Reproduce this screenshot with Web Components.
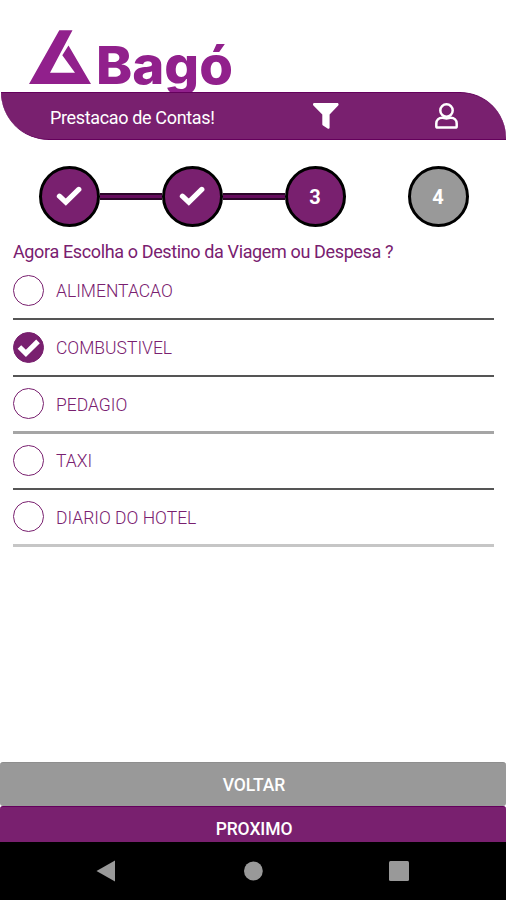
<!DOCTYPE html>
<html lang="pt-BR">
<head>
<meta charset="utf-8">
<meta name="viewport" content="width=device-width, initial-scale=1">
<title>Prestacao de Contas</title>
<style>
  :root {
    --primary: #79206f;
    --primary-dark: #64005c;
    --muted: #999999;
    --logo: #91208c;
  }
  body {
    margin: 0;
    background: #fff;
    font-family: Roboto, "Liberation Sans", sans-serif;
  }
</style>
</head>
<body>
<expense-app>
  <brand-logo slot="top"></brand-logo>
  <app-bar slot="top">Prestacao de Contas!</app-bar>

  <step-progress>
    <step-item state="done"></step-item>
    <step-item state="done"></step-item>
    <step-item state="current">3</step-item>
    <step-item state="pending">4</step-item>
  </step-progress>

  <option-list>
    <span slot="title">Agora Escolha o Destino da Viagem ou Despesa ?</span>
    <option-item>ALIMENTACAO</option-item>
    <option-item checked>COMBUSTIVEL</option-item>
    <option-item line="mid">PEDAGIO</option-item>
    <option-item>TAXI</option-item>
    <option-item line="soft">DIARIO DO HOTEL</option-item>
  </option-list>

  <action-button slot="actions" tone="muted">VOLTAR</action-button>
  <action-button slot="actions">PROXIMO</action-button>
  <system-nav slot="nav"></system-nav>
</expense-app>

<script>
function define(name, html) {
  const template = document.createElement("template");
  template.innerHTML = html;

  customElements.define(name, class extends HTMLElement {
    constructor() {
      super();
      this.attachShadow({ mode: "open" });
      this.shadowRoot.appendChild(template.content.cloneNode(true));
    }
  });
}

define("expense-app", `
  <style>
    :host {
      display: flex;
      flex-direction: column;
      width: 100%;
      height: 900px;
      overflow: hidden;
    }
    main {
      flex: 1;
      min-height: 0;
    }
    .actions {
      flex: none;
      height: 80px;
      overflow: hidden;
    }
  </style>
  <slot name="top"></slot>
  <main><slot></slot></main>
  <div class="actions"><slot name="actions"></slot></div>
  <slot name="nav"></slot>
`);

define("brand-logo", `
  <style>
    :host {
      display: block;
      flex: none;
      height: 92px;
    }
    svg {
      display: block;
      fill: var(--logo);
    }
    text {
      font: 800 52px Inter, "Liberation Sans", sans-serif;
    }
  </style>
  <svg width="260" height="110" viewBox="0 0 260 110">
    <path d="M59.3 30.3H72.5L50 72.8H75L62.3 55.2L68.5 45.6L91 84H29Z"/>
    <text x="96" y="84" textLength="137" lengthAdjust="spacingAndGlyphs">Bagó</text>
  </svg>
`);

// The bar is positioned so that it covers the tail of the logo's "g".
define("app-bar", `
  <style>
    :host {
      display: grid;
      grid-template-columns: 1fr 122px 119px;
      align-items: center;
      flex: none;
      box-sizing: border-box;
      height: 48px;
      margin-left: 1px;
      padding-left: 49px;
      background: var(--primary);
      border: solid var(--primary-dark);
      border-width: 1px 0;
      border-radius: 0 46px 0 48px;
      color: #fff;
      font-size: 18px;
      letter-spacing: -0.35px;
      position: relative;
    }
    span {
      padding-top: 2px;
    }
    svg {
      display: block;
      justify-self: center;
    }
  </style>
  <span><slot></slot></span>
  <svg width="26" height="26" viewBox="0 0 26 26">
    <path fill="#fff" d="M1.3 0H24.2C25.5 0 26 1.5 25.2 2.4L16.6 11.6V24.4C16.6 25.6 15.5 26 14.6 25.4L10 22.5C9.5 22.1 9.3 21.8 9.3 21.2V11.6L.4 2.4C-.4 1.5 .1 0 1.3 0Z"/>
  </svg>
  <svg width="23" height="26" viewBox="0 0 23 26" fill="none" stroke="#fff" stroke-width="2.5">
    <circle cx="11.5" cy="7.5" r="6.2"/>
    <path d="M7.3 14.8C3.7 14.8 1.3 17.3 1.3 20.6V23.2C1.3 24.1 1.8 24.6 2.7 24.6H20.3C21.2 24.6 21.7 24.1 21.7 23.2V20.6C21.7 17.3 19.3 14.8 15.7 14.8C14 14.8 13.5 15.6 11.5 15.6C9.5 15.6 9 14.8 7.3 14.8Z"/>
  </svg>
`);

define("step-progress", `
  <style>
    :host {
      display: flex;
      padding: 25.5px 37.5px 0 38.5px;
    }
  </style>
  <slot></slot>
`);

define("step-item", `
  <style>
    :host {
      display: flex;
      align-items: center;
      flex: none;
      width: 123px;
      height: 61px;
    }
    :host([state="pending"]) {
      width: 61px;
    }
    .dot {
      display: grid;
      place-items: center;
      flex: none;
      box-sizing: border-box;
      width: 61px;
      height: 61px;
      border: 3px solid #000;
      border-radius: 50%;
      background: var(--primary);
      color: #fff;
      font-size: 20px;
      font-weight: 700;
    }
    :host([state="pending"]) .dot {
      background: var(--muted);
    }
    .num {
      padding-top: 2px;
    }
    .bar {
      display: none;
      flex: 1;
      box-sizing: border-box;
      height: 7px;
      background: #650d5d;
      border: solid #2c0629;
      border-width: 2px 0;
    }
    svg {
      display: none;
    }
    :host([state="done"]) .bar,
    :host([state="done"]) svg {
      display: block;
    }
    :host([state="done"]) .num {
      display: none;
    }
  </style>
  <div class="dot">
    <span class="num"><slot></slot></span>
    <svg width="26" height="20" viewBox="0 0 26 20">
      <path d="M3.4 10.2L9.8 16.2L22.8 3.4" fill="none" stroke="#fff" stroke-width="5.2" stroke-linecap="round"/>
    </svg>
  </div>
  <div class="bar"></div>
`);

define("option-list", `
  <style>
    :host {
      display: block;
      padding: 15px 12px 0 13px;
      color: var(--primary);
    }
    .title {
      height: 22.4px;
      line-height: 20px;
      font-size: 18px;
      letter-spacing: -0.37px;
      white-space: nowrap;
    }
  </style>
  <div class="title"><slot name="title"></slot></div>
  <slot></slot>
`);

define("option-item", `
  <style>
    :host {
      display: flex;
      align-items: center;
      gap: 12px;
      box-sizing: border-box;
      height: 56.6px;
      padding-bottom: 1.4px;
      border-bottom: 2px solid #555;
      font-size: 17.5px;
      font-weight: 300;
    }
    :host([line]) {
      padding-bottom: 0.4px;
      border-bottom: 3px solid #a5a5a5;
    }
    :host([line="soft"]) {
      border-bottom-color: #c6c6c6;
    }
    .radio {
      display: grid;
      place-items: center;
      flex: none;
      box-sizing: border-box;
      width: 31px;
      height: 31px;
      border: 1px solid var(--primary);
      border-radius: 50%;
    }
    :host([checked]) .radio {
      background: var(--primary);
    }
    svg {
      display: none;
    }
    :host([checked]) svg {
      display: block;
    }
    .label {
      padding-top: 2px;
    }
  </style>
  <div class="radio">
    <svg width="24" height="19" viewBox="0 0 24 19">
      <path d="M2.4 9L8.9 15.3L21 3.4" fill="none" stroke="#fff" stroke-width="5.2"/>
    </svg>
  </div>
  <span class="label"><slot></slot></span>
`);

define("action-button", `
  <style>
    :host {
      display: block;
    }
    button {
      display: block;
      box-sizing: border-box;
      width: 100%;
      height: 44px;
      padding: 0 0 0 2px;
      border: 0;
      border-top: 1px solid var(--primary-dark);
      border-radius: 3px;
      background: var(--primary);
      color: #fff;
      font: 500 17.5px Roboto, "Liberation Sans", sans-serif;
      letter-spacing: -0.1px;
    }
    :host([tone="muted"]) button {
      background: var(--muted);
      border-top-color: #8e8e8e;
    }
  </style>
  <button type="button"><slot></slot></button>
`);

define("system-nav", `
  <style>
    :host {
      display: grid;
      grid-template-columns: 1fr 1fr 1fr;
      place-items: center;
      flex: none;
      box-sizing: border-box;
      height: 58px;
      padding: 0 34px;
      background: #000;
    }
    svg {
      display: block;
      fill: var(--muted);
    }
  </style>
  <svg width="22" height="22" viewBox="0 0 22 22"><path d="M19 .5V21.5L.5 11Z"/></svg>
  <svg width="20" height="20" viewBox="0 0 20 20"><circle cx="10.4" cy="10" r="9.4"/></svg>
  <svg width="20" height="20" viewBox="0 0 20 20"><rect width="20" height="20" rx="1.5"/></svg>
`);
</script>
</body>
</html>
